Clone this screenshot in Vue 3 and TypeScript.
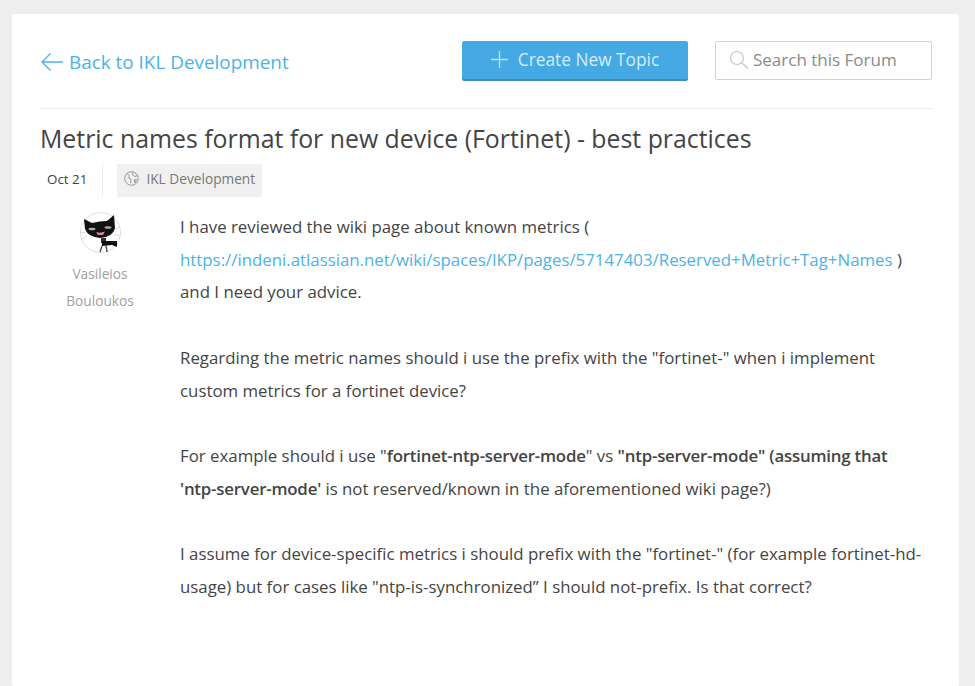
<script setup lang="ts">
const author: string[] = ['Vasileios', 'Bouloukos']
</script>

<template>
  <div class="page">
    <main class="card">
      <header class="top">
        <a class="back">
          <svg width="24" height="20" viewBox="0 0 24 20" fill="none" stroke="#4cb3e6" stroke-width="1.4">
            <path d="M23 10H2M10.500 1.500 2 10l8.500 8.500" />
          </svg>
          Back to IKL Development
        </a>
        <div class="actions">
          <button class="create">
            <svg width="17" height="17" viewBox="0 0 17 17" stroke="#bfe3f7" stroke-width="1.300" fill="none">
              <path d="M8.500 0v17M0 8.500h17" />
            </svg>
            Create New Topic
          </button>
          <div class="search">
            <svg width="20" height="20" viewBox="0 0 20 20" fill="none" stroke="#c4c4c4" stroke-width="1.100">
              <circle cx="8" cy="8" r="6.500" />
              <path d="M12.800 12.800 19 18.500" />
            </svg>
            <span>Search this Forum</span>
          </div>
        </div>
      </header>

      <h1 class="title">Metric names format for new device (Fortinet) - best practices</h1>

      <div class="meta">
        <span class="date">Oct 21</span>
        <span class="tag">
          <svg width="15" height="15" viewBox="0 0 15 15" fill="none" stroke="#999" stroke-width="1">
            <circle cx="7.500" cy="7.500" r="6.800" />
            <path d="M3 2.500 5.500 5 4.500 7 7 8.500 6.500 12M9 1.500 8.500 4 11 5.500 13.500 4.500M10 9l2.500-.5L11 12z" />
          </svg>
          IKL Development
        </span>
      </div>

      <section class="post">
        <aside class="who">
          <svg class="avatar" width="41" height="41" viewBox="0 0 41 41">
            <circle cx="20.500" cy="20.500" r="20" fill="#fff" stroke="#ddd" />
            <path d="M33 18 40 15M34 22l6 2M6 20l-5 1M7 24l-5 3" stroke="#ccc" stroke-width=".7" />
            <path d="M4 7 12 11Q20 9 27 9L34 3 35 16Q33 25 20 26 8 25 5 17z" fill="#111" />
            <path d="M16 20Q20 21.500 25 19.500L23 23H18z" fill="#d98a9a" />
            <ellipse cx="12" cy="17" rx="3.500" ry="1.300" fill="#aaa" />
            <ellipse cx="28" cy="15.500" rx="3.500" ry="1.300" fill="#aaa" />
            <path d="M21 26h5v4l-5 1z" fill="#333" />
            <path d="M22 29h15v6l-5-2-10 1z" fill="#111" />
            <path d="M22 34l-2 6M26 33l1 7" stroke="#555" stroke-width="1.500" />
          </svg>
          <div v-for="n in author" :key="n" class="name">{{ n }}</div>
        </aside>
        <div class="body">
          I have reviewed the wiki page about known metrics (
          <a class="link">https://indeni.atlassian.net/wiki/spaces/IKP/pages/57147403/Reserved+Metric+Tag+Names</a> )
          and I need your advice.<br /><br />
          Regarding the metric names should i use the prefix with the "fortinet-" when i implement custom metrics for a fortinet device?<br /><br />
          For example should i use "<b>fortinet-ntp-server-mode</b>" vs <b>"ntp-server-mode" (assuming that <span class="keep">'ntp-server-mode'</span></b> is not reserved/known in the aforementioned wiki page?)<br /><br />
          I assume for device-specific metrics i should prefix with the "fortinet-" (for example fortinet-hd-usage) but for cases like "ntp-is-synchronized” I should not-prefix. Is that correct?
        </div>
      </section>
    </main>
  </div>
</template>

<style>
html, body { margin: 0; background: #eeeeee; }
</style>

<style scoped>
.page {
  height: 686px;
  overflow: hidden;
  padding: 14px 16px 0 12px;
  box-sizing: border-box;
  font-family: "Open Sans", Lato, sans-serif;
  color: #444;
}
.card {
  background: #fff;
  height: 672px;
  padding: 27px 27px 0 28px;
  box-sizing: border-box;
  border-radius: 2px;
}
.top {
  display: flex;
  justify-content: space-between;
  align-items: flex-start;
  height: 67px;
  border-bottom: 1px solid #eee;
}
.back {
  display: flex;
  align-items: center;
  gap: 5px;
  margin-top: 10px;
  color: #4cb3e6;
  font-size: 18.900px;
  line-height: 22px;
}
.actions { display: flex; gap: 27px; }
.create {
  display: flex;
  align-items: center;
  justify-content: center;
  gap: 10px;
  width: 226px;
  height: 40px;
  padding: 0 0 2px;
  border: 0;
  border-bottom: 2px solid #3a8fbf;
  border-radius: 2px;
  background: #45a9e4;
  color: #d4edfb;
  font: 17.300px "Open Sans", sans-serif;
}
.search {
  display: flex;
  align-items: center;
  gap: 4px;
  width: 217px;
  height: 39px;
  padding: 0 0 2px 13px;
  box-sizing: border-box;
  border: 1px solid #d2d2d2;
  border-radius: 2px;
  color: #8a8a8a;
  font-size: 17px;
}
.title {
  margin: 13px 0 0;
  font-size: 24.850px;
  line-height: 32px;
  font-weight: 400;
  color: #444;
}
.meta {
  display: flex;
  align-items: stretch;
  height: 33px;
  margin-top: 10px;
  font-size: 13.700px;
}
.date {
  display: flex;
  align-items: center;
  padding: 0 15px 3px 7px;
  border-right: 1px solid #eee;
  margin-right: 14px;
  font-size: 13.400px;
}
.tag {
  display: flex;
  align-items: center;
  gap: 7px;
  padding: 0 7px 4px;
  background: #f0f0f0;
  color: #777;
}
.post { display: flex; margin-top: 14px; }
.who {
  width: 140px;
  flex: none;
  display: flex;
  flex-direction: column;
  align-items: center;
  padding-right: 20px;
  padding-top: 1px;
  box-sizing: border-box;
}
.avatar { margin-bottom: 7px; }
.name { font-size: 13.700px; line-height: 27px; color: #a0a0a0; }
.body {
  font-size: 16.830px;
  line-height: 32.730px;
  color: #444;
}
.body b { font-weight: 600; letter-spacing: -0.2px; }
.keep { white-space: nowrap; }
.link { color: #4cb3e6; }
</style>
